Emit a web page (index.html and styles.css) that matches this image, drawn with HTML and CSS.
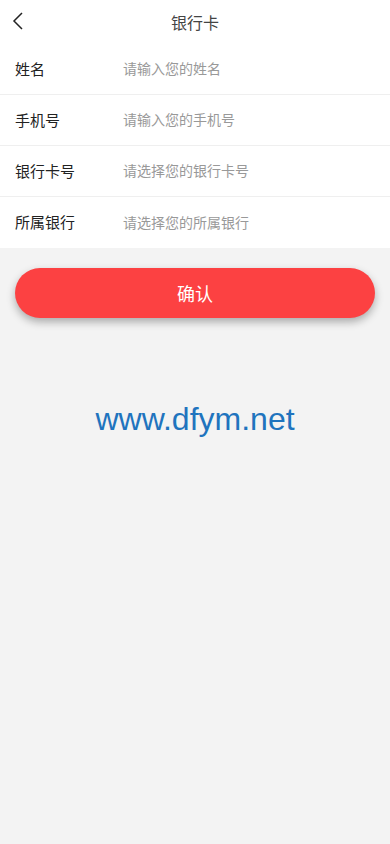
FILE: index.html
```html
<!DOCTYPE html>
<html lang="zh">
<head>
<meta charset="utf-8">
<meta name="viewport" content="width=device-width, initial-scale=1">
<title>银行卡</title>
<link rel="stylesheet" href="styles.css">
</head>
<body>
<div class="top">
  <header class="header">
    <span class="back"><svg width="12" height="18" viewBox="0 0 12 18"><path d="M10 1 L2 9 L10 17" fill="none" stroke="#222" stroke-width="1.5"/></svg></span>
    <h1 class="title">银行卡</h1>
  </header>
  <div class="form">
    <div class="row"><span class="label">姓名</span><span class="ph">请输入您的姓名</span></div>
    <div class="row"><span class="label">手机号</span><span class="ph">请输入您的手机号</span></div>
    <div class="row"><span class="label">银行卡号</span><span class="ph">请选择您的银行卡号</span></div>
    <div class="row last"><span class="label">所属银行</span><span class="ph">请选择您的所属银行</span></div>
  </div>
</div>
<div class="actions">
  <button class="btn">确认</button>
</div>
<div class="mark">www.dfym.net</div>
</body>
</html>
```
FILE: styles.css
```css
html, body { margin: 0; padding: 0; }
body {
  background: #f3f3f3;
  font-family: "Noto Sans CJK SC", "Noto Sans", sans-serif;
  min-height: 844px;
}
.top { background: #fff; }
.header {
  height: 44px;
  display: flex;
  align-items: center;
  justify-content: center;
  position: relative;
}
.back {
  position: absolute;
  left: 12px;
  top: 12px;
  display: flex;
}
.title {
  margin: 0;
  font-size: 16px;
  font-weight: normal;
  color: #444;
}
.row {
  height: 50px;
  display: flex;
  align-items: center;
  border-bottom: 1px solid #efefef;
  padding-left: 15px;
  padding-bottom: 2px;
  box-sizing: border-box;
  height: 51px;
}
.row.last { border-bottom: none; height: 51px; }
.label {
  width: 108px;
  font-size: 15px;
  color: #222;
}
.ph {
  font-size: 14px;
  color: #999;
}
.actions {
  padding: 20px 15px 0;
}
.btn {
  display: block;
  width: 100%;
  height: 50px;
  border: none;
  border-radius: 25px;
  background: #fc4142;
  color: #fff;
  font-family: "Noto Sans CJK SC", sans-serif;
  font-size: 18px;
  box-shadow: 0 4px 8px rgba(0,0,0,0.3);
}
.mark {
  margin-top: 83px;
  text-align: center;
  font-family: "Liberation Sans", Arial, sans-serif;
  font-size: 32px;
  color: #1f74be;
}
```
